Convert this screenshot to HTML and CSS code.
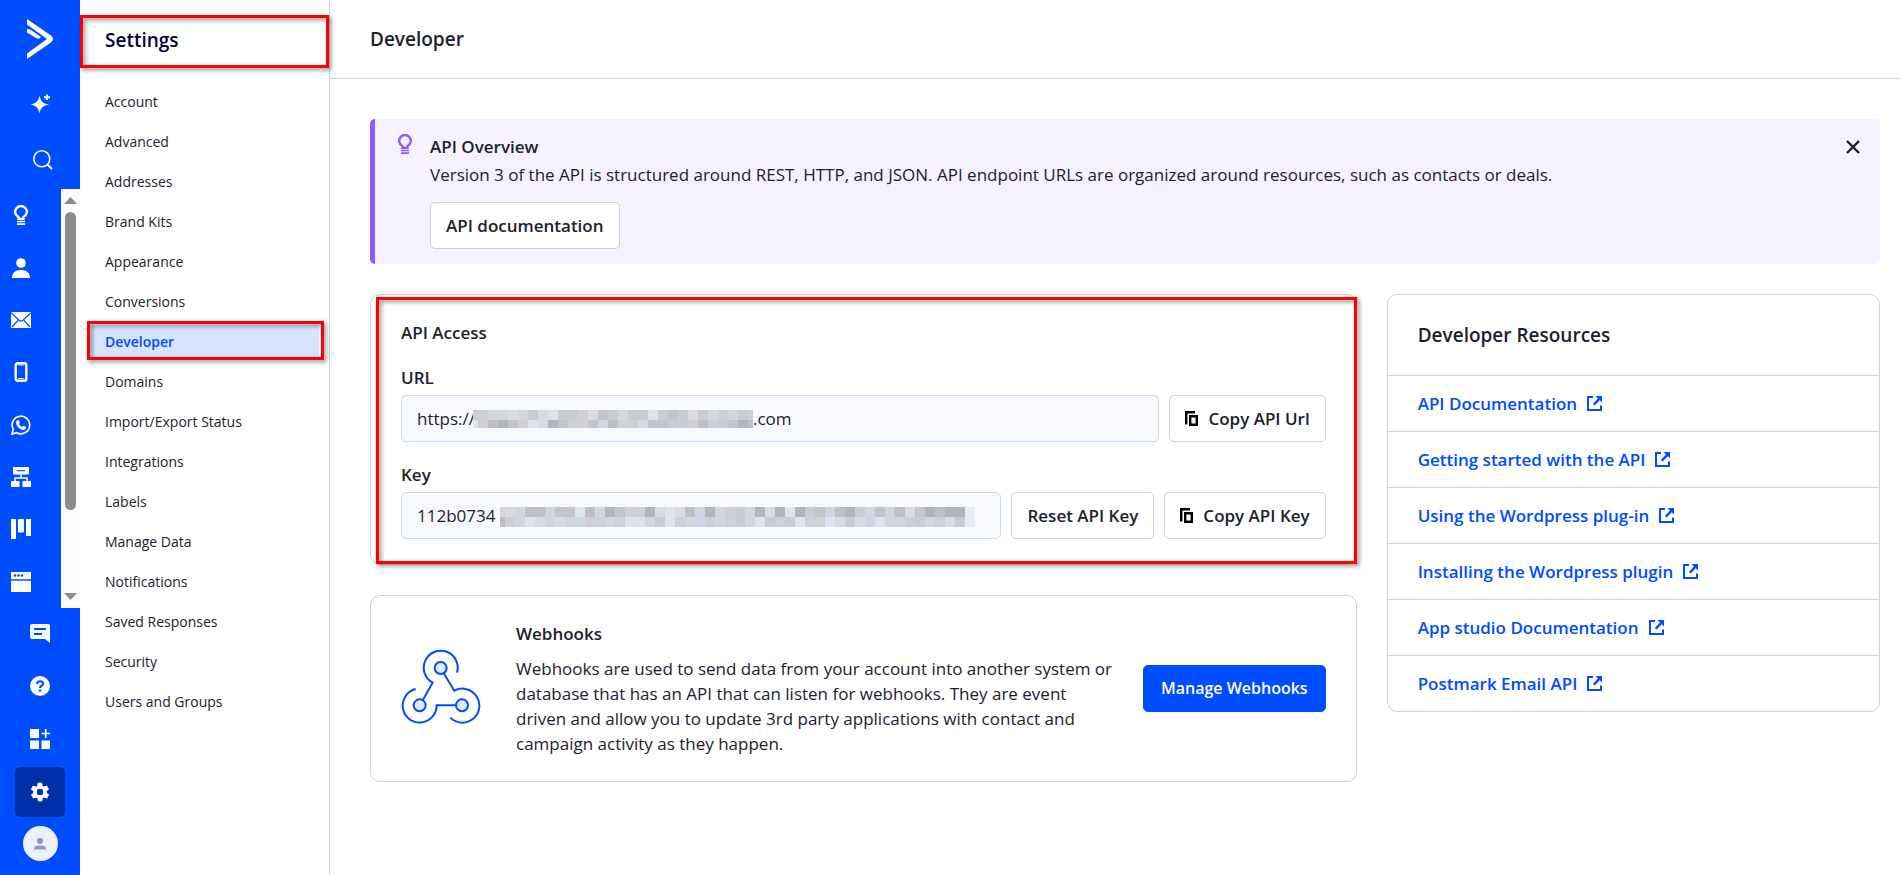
FILE: index.html
```
<!DOCTYPE html>
<html lang="en">
<head>
    <meta charset="UTF-8">
    <meta name="viewport" content="width=device-width, initial-scale=1.0">
    <title>Developer Settings</title>
    <link rel="stylesheet" href="styles.css">
</head>
<body>

    <!-- Shared icons -->
    <svg class="sprite" aria-hidden="true">
        <symbol id="bulb" viewBox="0 0 16 20">
            <path d="M5.500 14v-2a5.800 5.800 0 1 1 5 0v2z" fill="none" stroke="currentColor" stroke-width="2.400"/>
            <path d="M4 16h8v1.300H4zM4 18.200h8V20H4z" fill="currentColor"/>
        </symbol>
        <symbol id="copy" viewBox="0 0 13 15">
            <path d="M1.200 13.500V1.200H10" fill="none" stroke="currentColor" stroke-width="2.400"/>
            <path d="M5.200 5.200h6.600v8.600H5.200z" fill="none" stroke="currentColor" stroke-width="2.400"/>
        </symbol>
        <symbol id="external" viewBox="0 0 15 15">
            <path d="M6 1H1v13h13V9.500" fill="none" stroke="currentColor" stroke-width="2"/>
            <path d="M8.500 0H15v6.500l-2.200-2.200-5.300 5.300-1.700-1.700 5.200-5.300z" fill="currentColor"/>
        </symbol>
    </svg>

    <div class="app">

        <!-- Blue icon rail -->
        <nav class="rail" aria-label="Main">
            <a class="rail-logo" href="#" aria-label="Home">
                <svg width="26" height="40" viewBox="0 0 26 40"><path d="M0 0l24 16.500q4 3.500 0 7L0 40v-5.500L20 20 0 5.500zM0 10q2-.5 4 1l10 7q-1.500 3-5 1L0 13.500z" fill="#fff"/></svg>
            </a>
            <button class="rail-item rail-ai" type="button" aria-label="Assistant">
                <svg width="20" height="20" viewBox="0 0 20 20"><path d="M9.500 1.500c1 5.500 3 8 9.500 9-6.500 1.500-8.500 3.500-9.500 9-1-5.500-3-7.500-9-9 6-1.500 8-3.500 9-9z" fill="#fff"/><path d="M14 3.300h6M17 .5v5.600" stroke="#fff" stroke-width="2"/></svg>
            </button>
            <button class="rail-item rail-search" type="button" aria-label="Search">
                <svg width="20" height="20" viewBox="0 0 20 20"><circle cx="8.800" cy="8.800" r="8" fill="none" stroke="#fff" stroke-width="1.600"/><path d="M14.500 14.500l4.500 4.500" stroke="#fff" stroke-width="2.200"/></svg>
            </button>

            <div class="rail-scroll">
                <div class="rail-list">
                    <a href="#" aria-label="Getting started"><svg width="16" height="20"><use href="#bulb"/></svg></a>
                    <a href="#" aria-label="Contacts"><svg width="20" height="20" viewBox="0 0 20 20"><circle cx="10" cy="5" r="4.800" fill="#fff"/><path d="M1 20c0-5 3-8 9-8s9 3 9 8z" fill="#fff"/></svg></a>
                    <a href="#" aria-label="Campaigns"><svg width="20" height="16" viewBox="0 0 20 16"><path d="M0 0h20v16H0z" fill="#fff"/><path d="M0 .8l8 7.500q2 1.800 4 0l8-7.500M1 15l6-6.500M19 15l-6-6.500" fill="none" stroke="#004cff" stroke-width="1.200"/></svg></a>
                    <a href="#" aria-label="Mobile"><svg width="14" height="20" viewBox="0 0 13 20"><rect x="1.200" y="1.200" width="10.600" height="17.600" rx="2" fill="none" stroke="#fff" stroke-width="2.400"/><path d="M4 3h5M4 16.500h5" stroke="#fff"/></svg></a>
                    <a href="#" aria-label="WhatsApp"><svg width="20" height="20" viewBox="0 0 20 20"><path d="M1 19l1.300-4.600A8.800 8.800 0 1 1 5.700 17.700z" fill="none" stroke="#fff" stroke-width="1.700"/><path d="M6.400 5.200h1.500l1 2.400-.9 1.300q1.200 2.200 3.400 3.100l1.100-1.300 2.500 1.200q0 3-2.900 3C8.500 14.500 4 9.500 5.400 6.200z" fill="#fff"/></svg></a>
                    <a href="#" aria-label="Automations"><svg width="20" height="20" viewBox="0 0 20 20"><rect x="2" width="16" height="7.500" rx="1" fill="#fff"/><path d="M6 3.700h8" stroke="#004cff" stroke-width="1.200"/><path d="M10 7v4M4 14v-3h12v3" fill="none" stroke="#fff" stroke-width="1.500"/><path d="M0 14h8.500v6H0zM11.500 14H20v6h-8.500z" fill="#fff"/></svg></a>
                    <a href="#" aria-label="Deals"><svg width="20" height="20" viewBox="0 0 20 20" fill="#fff"><path d="M0 0h5v20H0zM15 0h5v17h-5z"/><rect x="7" width="6" height="13.500" rx="1"/></svg></a>
                    <a href="#" aria-label="Website"><svg width="20" height="20" viewBox="0 0 20 20"><path d="M0 0h20v20H0z" fill="#fff"/><path d="M0 8h20" stroke="#004cff" stroke-width="1.500"/><g fill="#004cff"><circle cx="4" cy="3.500" r="1.300"/><circle cx="7.500" cy="3.500" r="1.300"/><circle cx="11" cy="3.500" r="1.300"/></g></svg></a>
                </div>
                <div class="scrollbar" aria-hidden="true">
                    <svg width="13" height="7"><path d="M0 7L6.500 0 13 7z" fill="#8b8b8b"/></svg>
                    <div class="track"><div class="thumb"></div></div>
                    <svg width="13" height="7"><path d="M0 0l6.500 7L13 0z" fill="#8b8b8b"/></svg>
                </div>
            </div>

            <div class="rail-bottom">
                <a href="#" aria-label="Messages"><svg width="20" height="20" viewBox="0 0 20 20"><path d="M2 1h16q2 0 2 2v17l-5-4H2q-2 0-2-2V3q0-2 2-2z" fill="#fff"/><path d="M4 6h12M4 11h8" stroke="#004cff" stroke-width="2"/></svg></a>
                <a href="#" aria-label="Help"><svg width="20" height="20" viewBox="0 0 20 20"><circle cx="10" cy="10" r="10" fill="#fff"/><path d="M7 8q0-2.800 3-2.800T13 7.800q0 1.400-1.700 2.200-1.300.7-1.300 2" fill="none" stroke="#004cff" stroke-width="2"/><circle cx="10" cy="14.500" r="1.300" fill="#004cff"/></svg></a>
                <a href="#" aria-label="Apps"><svg width="20" height="20" viewBox="0 0 20 20"><path d="M0 0h9v9H0zM0 11.500h9V20H0zM11.500 11.500H20V20h-8.500z" fill="#fff"/><path d="M11.500 4.500H20M15.700 0v9" stroke="#fff" stroke-width="1.700"/></svg></a>
                <a class="current" href="#" aria-label="Settings"><svg width="22" height="22" viewBox="0 0 24 24"><path d="M19.400 13c0-.3.100-.6.100-1s0-.7-.1-1l2.100-1.600c.2-.1.200-.4.100-.6l-2-3.500c-.1-.2-.4-.3-.6-.2l-2.500 1c-.5-.4-1.100-.7-1.700-1l-.4-2.600c0-.3-.2-.5-.5-.5h-4c-.2 0-.4.200-.5.400l-.4 2.700c-.6.200-1.100.6-1.700 1l-2.500-1c-.2-.1-.5 0-.6.200l-2 3.500c-.1.200-.1.500.1.600L4.600 11c0 .3-.1.700-.1 1s0 .7.100 1l-2.100 1.600c-.2.200-.3.400-.1.700l2 3.400c.1.300.3.300.6.300l2.500-1c.5.400 1 .7 1.700 1l.4 2.600c0 .2.200.4.500.4h4c.2 0 .5-.2.500-.4l.4-2.700c.6-.2 1.200-.5 1.700-.9l2.500 1c.2 0 .5 0 .6-.3l2-3.400c.1-.3.100-.5-.1-.7zM12 15.500a3.500 3.500 0 1 1 0-7 3.500 3.500 0 0 1 0 7z" fill="#fff"/></svg></a>
                <a class="avatar" href="#" aria-label="Profile"><svg width="12" height="12" viewBox="0 0 12 12" fill="#8f96b5"><circle cx="6" cy="3" r="3"/><path d="M0 11.500c0-3 2-4 6-4s6 1 6 4z"/></svg></a>
            </div>
        </nav>

        <!-- Settings menu -->
        <aside class="settings">
            <div class="settings-head callout">
                <h2>Settings</h2>
            </div>
            <ul>
                <li><a href="#">Account</a></li>
                <li><a href="#">Advanced</a></li>
                <li><a href="#">Addresses</a></li>
                <li><a href="#">Brand Kits</a></li>
                <li><a href="#">Appearance</a></li>
                <li><a href="#">Conversions</a></li>
                <li><a class="active callout" href="#">Developer</a></li>
                <li><a href="#">Domains</a></li>
                <li><a href="#">Import/Export Status</a></li>
                <li><a href="#">Integrations</a></li>
                <li><a href="#">Labels</a></li>
                <li><a href="#">Manage Data</a></li>
                <li><a href="#">Notifications</a></li>
                <li><a href="#">Saved Responses</a></li>
                <li><a href="#">Security</a></li>
                <li><a href="#">Users and Groups</a></li>
            </ul>
        </aside>

        <main>
            <header>
                <h1>Developer</h1>
            </header>

            <div class="content">
                <!-- Info banner -->
                <section class="banner">
                    <svg class="banner-icon" width="16" height="20"><use href="#bulb"/></svg>
                    <div class="banner-body">
                        <h3>API Overview</h3>
                        <p>Version 3 of the API is structured around REST, HTTP, and JSON. API endpoint URLs are organized around resources, such as contacts or deals.</p>
                        <button class="btn" type="button">API documentation</button>
                    </div>
                    <button class="close" type="button" aria-label="Close">
                        <svg width="14" height="14" viewBox="0 0 14 14"><path d="M1 1l12 12M13 1L1 13" stroke="currentColor" stroke-width="2.400"/></svg>
                    </button>
                </section>

                <div class="columns">
                    <div class="left">
                        <section class="card access callout">
                            <h3>API Access</h3>

                            <label for="apiUrl">URL</label>
                            <div class="row">
                                <div class="field">
                                    <input type="text" id="apiUrl" value="https://" readonly>
                                    <div class="redacted redacted-url">
                                        <svg id="urlMask" width="280" height="18"></svg>
                                        <span>.com</span>
                                    </div>
                                </div>
                                <button class="btn" type="button"><svg width="13" height="15"><use href="#copy"/></svg>Copy API Url</button>
                            </div>

                            <label for="apiKey">Key</label>
                            <div class="row">
                                <div class="field">
                                    <input type="text" id="apiKey" value="112b0734" readonly>
                                    <div class="redacted redacted-key">
                                        <svg id="keyMask" width="483" height="20"></svg>
                                    </div>
                                </div>
                                <button class="btn" type="button">Reset API Key</button>
                                <button class="btn" type="button"><svg width="13" height="15"><use href="#copy"/></svg>Copy API Key</button>
                            </div>
                        </section>

                        <section class="card webhooks">
                            <svg width="80" height="79" viewBox="123 189 240 237" fill="none" stroke="#004cff" stroke-width="6">
                                <path d="M291 260A51 51 0 1 0 218 290L189 341"/>
                                <path d="M167 309A51 51 0 1 0 230 358H288"/>
                                <path d="M251 262L283 314A51 51 0 1 1 271 395"/>
                                <g fill="#e0e9ff">
                                    <circle cx="242" cy="246" r="18"/>
                                    <circle cx="179" cy="358" r="18"/>
                                    <circle cx="306" cy="358" r="18"/>
                                </g>
                            </svg>
                            <div class="webhooks-text">
                                <h3>Webhooks</h3>
                                <p>Webhooks are used to send data from your account into another system or database that has an API that can listen for webhooks. They are event driven and allow you to update 3rd party applications with contact and campaign activity as they happen.</p>
                            </div>
                            <button class="btn primary" type="button">Manage Webhooks</button>
                        </section>
                    </div>

                    <section class="card resources">
                        <h2>Developer Resources</h2>
                        <ul>
                            <li><a href="#">API Documentation <svg width="15" height="15"><use href="#external"/></svg></a></li>
                            <li><a href="#">Getting started with the API <svg width="15" height="15"><use href="#external"/></svg></a></li>
                            <li><a href="#">Using the Wordpress plug-in <svg width="15" height="15"><use href="#external"/></svg></a></li>
                            <li><a href="#">Installing the Wordpress plugin <svg width="15" height="15"><use href="#external"/></svg></a></li>
                            <li><a href="#">App studio Documentation <svg width="15" height="15"><use href="#external"/></svg></a></li>
                            <li><a href="#">Postmark Email API <svg width="15" height="15"><use href="#external"/></svg></a></li>
                        </ul>
                    </section>
                </div>
            </div>
        </main>
    </div>

    <script src="script.js"></script>
</body>
</html>
```
FILE: styles.css
```
* { box-sizing: border-box; }

body {
    margin: 0;
    font-family: "Open Sans", "Noto Sans", sans-serif;
    font-size: 17px;
    line-height: 25px;
    color: #1c212d;
    background: #fff;
}

h1, h2, h3, p, ul { margin: 0; padding: 0; }
h1, h2 { font-size: 19px; font-weight: 600; }
h3 { font-size: 17px; font-weight: 600; }
ul { list-style: none; }
a { text-decoration: none; }
svg { display: block; flex: none; }
.sprite { position: absolute; width: 0; height: 0; }

.app { display: flex; min-height: 100vh; }

/* Red highlight frames */
.callout { position: relative; }
.callout::after {
    content: "";
    position: absolute;
    border: 3px solid #ff0000;
    filter: drop-shadow(2px 2px 2px rgba(0, 0, 0, 0.5));
    pointer-events: none;
}

/* Icon rail */
.rail {
    width: 80px;
    flex: none;
    display: flex;
    flex-direction: column;
    background: #004cff;
}
.rail a, .rail-item { display: flex; align-items: center; justify-content: center; color: #fff; }
.rail-item { padding: 0; border: 0; background: none; }
.rail-logo { height: 78px; }
.rail-ai { height: 52px; }
.rail-search { height: 59px; padding-left: 5px; }
.rail-scroll { display: flex; height: 419px; }
.rail-list {
    flex: 1;
    display: flex;
    flex-direction: column;
    padding-right: 19px;
}
.rail-list a { flex: 1; }
.scrollbar {
    width: 19px;
    flex: none;
    display: flex;
    flex-direction: column;
    align-items: center;
    padding: 8px 0;
    background: #fcfcfc;
}
.track { flex: 1; margin: 8px 0; }
.thumb { width: 11px; height: 77%; border-radius: 6px; background: #8b8b8b; }
.thumb { height: 80%; }
.rail-bottom {
    display: flex;
    flex-direction: column;
    align-items: center;
    gap: 3px;
}
.rail-bottom a { width: 50px; height: 50px; border-radius: 5px; }
.rail-bottom .current { background: #0030a8; }
.rail-bottom .avatar {
    width: 35px;
    height: 35px;
    margin-top: 6px;
    border-radius: 50%;
    background: #edf0f8;
}

/* Settings menu */
.settings { width: 250px; flex: none; border-right: 1px solid #cbd0de; }
.settings-head { height: 82px; padding: 28px 25px; color: #00003d; }
.settings-head::after { top: 15px; right: 0; bottom: 14px; left: 0; }
.settings ul { padding: 0 10px 0 8px; }
.settings li { padding: 3px 0; }
.settings li a {
    display: block;
    padding-left: 17px;
    font-size: 14px;
    line-height: 34px;
    color: #1c212d;
}
.settings li .active { background: #d6e3ff; color: #004cff; font-weight: 600; }
.active::after { top: -4px; right: -5px; bottom: -1px; left: -1px; }

/* Main area */
main { flex: 1; min-width: 0; }
header { padding: 27px 40px 26px; border-bottom: 1px solid #cbd0de; }
.content { padding: 40px 20px 40px 40px; }

.btn {
    display: flex;
    align-items: center;
    justify-content: center;
    flex: none;
    gap: 10px;
    height: 47px;
    padding: 0 15px;
    border: 1px solid #cbd0de;
    border-radius: 5px;
    background: #fff;
    color: #1c212d;
    font: inherit;
    font-weight: 600;
    white-space: nowrap;
}
.btn svg { color: #000; }
.primary { padding: 0 17px; border-color: #004cff; background: #004cff; color: #fff; font-size: 16px; }

.banner {
    display: flex;
    padding: 15px 20px 15px 22px;
    border-left: 5px solid #8f5aff;
    border-radius: 5px;
    background: #f5f1ff;
}
.banner-icon { color: #8f5aff; }
.banner-body { flex: 1; margin-left: 17px; }
.banner-body p { line-height: 32px; }
.banner-body .btn { margin-top: 11px; }
.close {
    display: flex;
    align-self: flex-start;
    margin-top: 6px;
    padding: 0;
    border: 0;
    background: none;
    color: #1c212d;
}

.columns {
    display: grid;
    grid-template-columns: 2fr 1fr;
    align-items: start;
    gap: 30px;
    margin-top: 30px;
}
.left { display: grid; gap: 30px; }
.card { border: 1px solid #cbd0de; border-radius: 10px; }

/* API access */
.access { padding: 25px 30px; }
.access::after { top: 2px; right: -1px; bottom: 0; left: 5px; }
.access label { display: block; margin: 20px 0 5px; font-weight: 600; }
.row { display: flex; gap: 10px; }
.field { flex: 1; position: relative; }
.field input {
    width: 100%;
    height: 47px;
    padding: 0 15px;
    border: 1px solid #c9d9fc;
    border-radius: 5px;
    background: #f8f9ff;
    color: #1c212d;
    font: inherit;
}
.redacted { position: absolute; top: 11px; display: flex; align-items: center; }
.redacted-url { left: 72px; }
.redacted-key { top: 15px; left: 99px; }

/* Webhooks */
.webhooks { display: flex; align-items: center; padding: 25px 30px; }
.webhooks-text { flex: 1; margin: 0 30px 0 35px; }
.webhooks-text p { margin-top: 10px; }

/* Resources */
.resources h2 { padding: 28px 30px 27px; }
.resources li { padding: 15px 30px; border-top: 1px solid #cbd0de; }
.resources a { display: flex; align-items: center; gap: 10px; color: #004cff; font-weight: 600; }
```
FILE: script.js
```
// Draws the grey blocks that hide the account name and the key
var shades = {
    a: "#b1b5bf", b: "#bfc0c5", c: "#c4c5ca", d: "#c9ccd5", e: "#cfd0d5",
    f: "#d3d5df", g: "#d9dbe1", h: "#cdd6e2", i: "#dfe3ed", j: "#ebecf3"
};

function drawMask(id, rows) {
    var svg = document.getElementById(id);
    rows.forEach(function (row, y) {
        row.split("").forEach(function (key, x) {
            var rect = document.createElementNS("http://www.w3.org/2000/svg", "rect");
            rect.setAttribute("x", x * 10 - 5);
            rect.setAttribute("y", y * 10);
            rect.setAttribute("width", 10);
            rect.setAttribute("height", 10);
            rect.setAttribute("fill", shades[key]);
            svg.appendChild(rect);
        });
    });
}

drawMask("urlMask", [
    "eeffgfdgiddegcdfddidcdgdfehde",
    "iebaceigaceecfbeegccddebedcab"
]);

drawMask("keyMask", [
    "fgfbbhccibfaceeagigbhafedfagaiadchbadfchbgcabaaj",
    "befigfgfheefeiifdiefhefedfidedieeigdghiffedfegdj"
]);
```
